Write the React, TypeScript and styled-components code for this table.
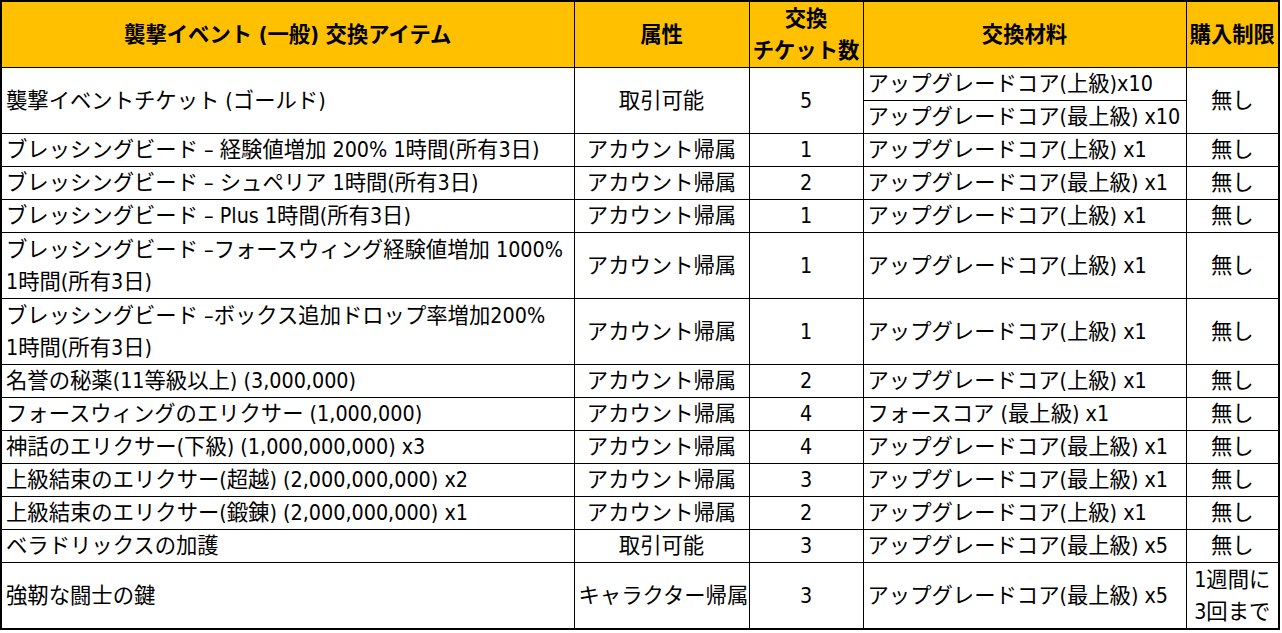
import React from "react";
import styled, { createGlobalStyle } from "styled-components";

const Global = createGlobalStyle`
  html, body { margin: 0; padding: 0; background: #ffffff; }
  body {
    font-family: "DejaVu Sans Condensed", "Noto Sans", "Noto Sans CJK JP", sans-serif;
    color: #000;
  }
`;

const Table = styled.table`
  border-collapse: collapse;
  table-layout: fixed;
  width: 1280px;
  border: 2px solid #000;
  font-size: 21.33px;
  line-height: 32px;
`;

const HeadCell = styled.th`
  background: #ffc000;
  font-weight: 700;
  border: 1px solid #000;
  height: 65px;
  padding: 0 2px;
  text-align: center;
  vertical-align: middle;
  white-space: nowrap;
`;

const Cell = styled.td<{ $align?: "left" | "center" }>`
  border: 1px solid #000;
  padding: 0 4px;
  height: 32px;
  text-align: ${(p) => p.$align ?? "left"};
  vertical-align: middle;
  white-space: nowrap;
  font-weight: 400;
`;

type Row = {
  item: React.ReactNode;
  attr: string;
  count: string;
  mats: string;
  limit: React.ReactNode;
  tall?: boolean;
};

const rows: Row[] = [
  {
    item: <>ブレッシングビード – 経験値増加 200% 1時間(所有3日)</>,
    attr: "アカウント帰属",
    count: "1",
    mats: "アップグレードコア(上級) x1",
    limit: "無し",
  },
  {
    item: <>ブレッシングビード – シュペリア 1時間(所有3日)</>,
    attr: "アカウント帰属",
    count: "2",
    mats: "アップグレードコア(最上級) x1",
    limit: "無し",
  },
  {
    item: <>ブレッシングビード – Plus 1時間(所有3日)</>,
    attr: "アカウント帰属",
    count: "1",
    mats: "アップグレードコア(上級) x1",
    limit: "無し",
  },
  {
    item: (
      <>
        ブレッシングビード –フォースウィング経験値増加 1000%
        <br />
        1時間(所有3日)
      </>
    ),
    attr: "アカウント帰属",
    count: "1",
    mats: "アップグレードコア(上級) x1",
    limit: "無し",
    tall: true,
  },
  {
    item: (
      <>
        ブレッシングビード –ボックス追加ドロップ率増加200%
        <br />
        1時間(所有3日)
      </>
    ),
    attr: "アカウント帰属",
    count: "1",
    mats: "アップグレードコア(上級) x1",
    limit: "無し",
    tall: true,
  },
  {
    item: <>名誉の秘薬(11等級以上) (3,000,000)</>,
    attr: "アカウント帰属",
    count: "2",
    mats: "アップグレードコア(上級) x1",
    limit: "無し",
  },
  {
    item: <>フォースウィングのエリクサー (1,000,000)</>,
    attr: "アカウント帰属",
    count: "4",
    mats: "フォースコア (最上級) x1",
    limit: "無し",
  },
  {
    item: <>神話のエリクサー(下級) (1,000,000,000) x3</>,
    attr: "アカウント帰属",
    count: "4",
    mats: "アップグレードコア(最上級) x1",
    limit: "無し",
  },
  {
    item: <>上級結束のエリクサー(超越) (2,000,000,000) x2</>,
    attr: "アカウント帰属",
    count: "3",
    mats: "アップグレードコア(最上級) x1",
    limit: "無し",
  },
  {
    item: <>上級結束のエリクサー(鍛錬) (2,000,000,000) x1</>,
    attr: "アカウント帰属",
    count: "2",
    mats: "アップグレードコア(上級) x1",
    limit: "無し",
  },
  {
    item: <>ベラドリックスの加護</>,
    attr: "取引可能",
    count: "3",
    mats: "アップグレードコア(最上級) x5",
    limit: "無し",
  },
  {
    item: <>強靭な闘士の鍵</>,
    attr: "キャラクター帰属",
    count: "3",
    mats: "アップグレードコア(最上級) x5",
    limit: (
      <>
        1週間に
        <br />
        3回まで
      </>
    ),
    tall: true,
  },
];

export default function App() {
  return (
    <>
      <Global />
      <Table>
        <colgroup>
          <col style={{ width: 573 }} />
          <col style={{ width: 175 }} />
          <col style={{ width: 114 }} />
          <col style={{ width: 323 }} />
          <col style={{ width: 93 }} />
        </colgroup>
        <thead>
          <tr>
            <HeadCell>襲撃イベント (一般) 交換アイテム</HeadCell>
            <HeadCell>属性</HeadCell>
            <HeadCell>
              交換
              <br />
              チケット数
            </HeadCell>
            <HeadCell>交換材料</HeadCell>
            <HeadCell>購入制限</HeadCell>
          </tr>
        </thead>
        <tbody>
          <tr>
            <Cell rowSpan={2}>襲撃イベントチケット (ゴールド)</Cell>
            <Cell rowSpan={2} $align="center">
              取引可能
            </Cell>
            <Cell rowSpan={2} $align="center">
              5
            </Cell>
            <Cell>アップグレードコア(上級)x10</Cell>
            <Cell rowSpan={2} $align="center">
              無し
            </Cell>
          </tr>
          <tr>
            <Cell>アップグレードコア(最上級) x10</Cell>
          </tr>
          {rows.map((r, i) => (
            <tr key={i}>
              <Cell style={r.tall ? { height: 65 } : undefined}>{r.item}</Cell>
              <Cell $align="center">{r.attr}</Cell>
              <Cell $align="center">{r.count}</Cell>
              <Cell>{r.mats}</Cell>
              <Cell $align="center">{r.limit}</Cell>
            </tr>
          ))}
        </tbody>
      </Table>
    </>
  );
}
